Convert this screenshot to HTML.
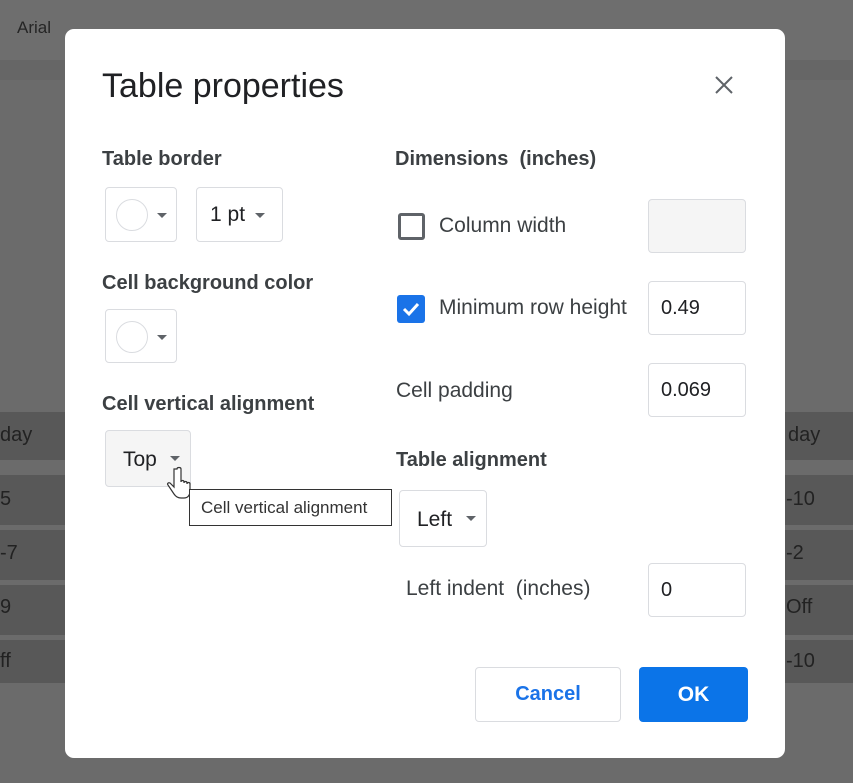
<!DOCTYPE html>
<html><head><style>
*{margin:0;padding:0;box-sizing:border-box}
body{width:853px;height:783px;overflow:hidden;background:#6b6b6b;font-family:"Liberation Sans",Arial,sans-serif;position:relative}
.a{position:absolute}
.row{position:absolute;left:0;width:853px;background:#585858}
.bg{color:#222;font-size:20px}
.dlg{left:65px;top:29px;width:720px;height:729px;background:#fff;border-radius:9px}
.lbl{font-size:20px;color:#3c4043;font-weight:bold}
.box{position:absolute;border:1px solid #dadce0;border-radius:4px;background:#fff}
.tri{position:absolute;width:0;height:0;border-left:5px solid transparent;border-right:5px solid transparent;border-top:5px solid #5f6368}
.circ{position:absolute;width:32px;height:32px;border:1px solid #dadce0;border-radius:50%}
.txt{font-size:21px;color:#202124;position:absolute}
.inp{position:absolute;border:1px solid #dadce0;border-radius:4px;width:98px;height:54px;font-size:20px;color:#202124;padding:15px 0 0 12px}
</style></head><body>
<div class="a" style="left:0;top:0;width:853px;height:60px;background:#6e6e6e"></div>
<div class="a bg" style="left:17px;top:18px;font-size:17px;color:#252525">Arial</div>
<div class="a" style="left:0;top:60px;width:853px;height:20px;background:#666"></div>
<div class="row" style="top:412px;height:48px"></div>
<div class="row" style="top:475px;height:50px"></div>
<div class="row" style="top:530px;height:50px"></div>
<div class="row" style="top:585px;height:50px"></div>
<div class="row" style="top:640px;height:43px"></div>
<div class="a bg" style="left:0;top:424px">day</div>
<div class="a bg" style="left:0;top:488px">5</div>
<div class="a bg" style="left:0;top:542px">-7</div>
<div class="a bg" style="left:0;top:596px">9</div>
<div class="a bg" style="left:0;top:650px">ff</div>
<div class="a bg" style="left:788px;top:424px">day</div>
<div class="a bg" style="left:786px;top:488px">-10</div>
<div class="a bg" style="left:786px;top:542px">-2</div>
<div class="a bg" style="left:786px;top:596px">Off</div>
<div class="a bg" style="left:786px;top:650px">-10</div>

<div class="a dlg"></div>
<div class="a" style="left:102px;top:67px;font-size:34px;color:#202124">Table properties</div>
<svg class="a" style="left:714px;top:75px" width="20" height="20"><path d="M2 2L18 18M18 2L2 18" stroke="#5f6368" stroke-width="2"/></svg>

<div class="a lbl" style="left:102px;top:148px">Table border</div>
<div class="box" style="left:105px;top:187px;width:72px;height:55px"><div class="circ" style="left:10px;top:11px"></div><div class="tri" style="left:51px;top:25px"></div></div>
<div class="box" style="left:196px;top:187px;width:87px;height:55px"><div class="txt" style="left:13px;top:15px">1 pt</div><div class="tri" style="left:58px;top:25px"></div></div>
<div class="a lbl" style="left:102px;top:272px">Cell background color</div>
<div class="box" style="left:105px;top:309px;width:72px;height:54px"><div class="circ" style="left:10px;top:11px"></div><div class="tri" style="left:51px;top:25px"></div></div>
<div class="a lbl" style="left:102px;top:393px">Cell vertical alignment</div>
<div class="box" style="left:105px;top:430px;width:86px;height:57px;background:#f5f5f5"><div class="txt" style="left:17px;top:17px">Top</div><div class="tri" style="left:64px;top:25px"></div></div>
<svg class="a" style="left:165px;top:466px" width="28" height="38"><path d="M9 3v18l-4-4c-2-1-3 1-2 2l6 9c2 3 4 4 7 4h3c4 0 6-3 6-7v-7c0-2-3-2-3 0v-1c0-2-3-2-3 0v-1c0-2-3-2-3 0V3c0-2-4-2-4 0z" fill="#fff" stroke="#333" stroke-width="1.2"/></svg>
<div class="a" style="left:189px;top:489px;width:203px;height:37px;border:1px solid #333;background:#fff;font-size:17px;color:#333;padding:8px 0 0 11px">Cell vertical alignment</div>

<div class="a lbl" style="left:395px;top:148px">Dimensions&nbsp; (inches)</div>
<div class="a" style="left:398px;top:213px;width:27px;height:27px;border:3px solid #5f6368;border-radius:3px"></div>
<div class="txt" style="left:439px;top:214px;color:#3c4043">Column width</div>
<div class="inp" style="left:648px;top:199px;background:#f5f5f5"></div>
<div class="a" style="left:397px;top:295px;width:28px;height:28px;background:#1a73e8;border-radius:3px"></div>
<svg class="a" style="left:397px;top:295px" width="28" height="28"><path d="M7 14l5 5 9-10" stroke="#fff" stroke-width="3" fill="none"/></svg>
<div class="txt" style="left:439px;top:296px;color:#3c4043">Minimum row height</div>
<div class="inp" style="left:648px;top:281px">0.49</div>
<div class="txt" style="left:396px;top:379px;color:#3c4043">Cell padding</div>
<div class="inp" style="left:648px;top:363px">0.069</div>
<div class="a lbl" style="left:396px;top:449px">Table alignment</div>
<div class="box" style="left:399px;top:490px;width:88px;height:57px"><div class="txt" style="left:17px;top:17px">Left</div><div class="tri" style="left:66px;top:25px"></div></div>
<div class="txt" style="left:406px;top:577px;color:#3c4043">Left indent&nbsp; (inches)</div>
<div class="inp" style="left:648px;top:563px">0</div>

<div class="box" style="left:475px;top:667px;width:146px;height:55px;text-align:center;line-height:53px;font-size:20px;color:#1a73e8;font-weight:bold">Cancel</div>
<div class="a" style="left:639px;top:667px;width:109px;height:55px;background:#0b74e8;border-radius:4px;text-align:center;line-height:55px;font-size:21px;color:#fff;font-weight:bold">OK</div>
</body></html>
